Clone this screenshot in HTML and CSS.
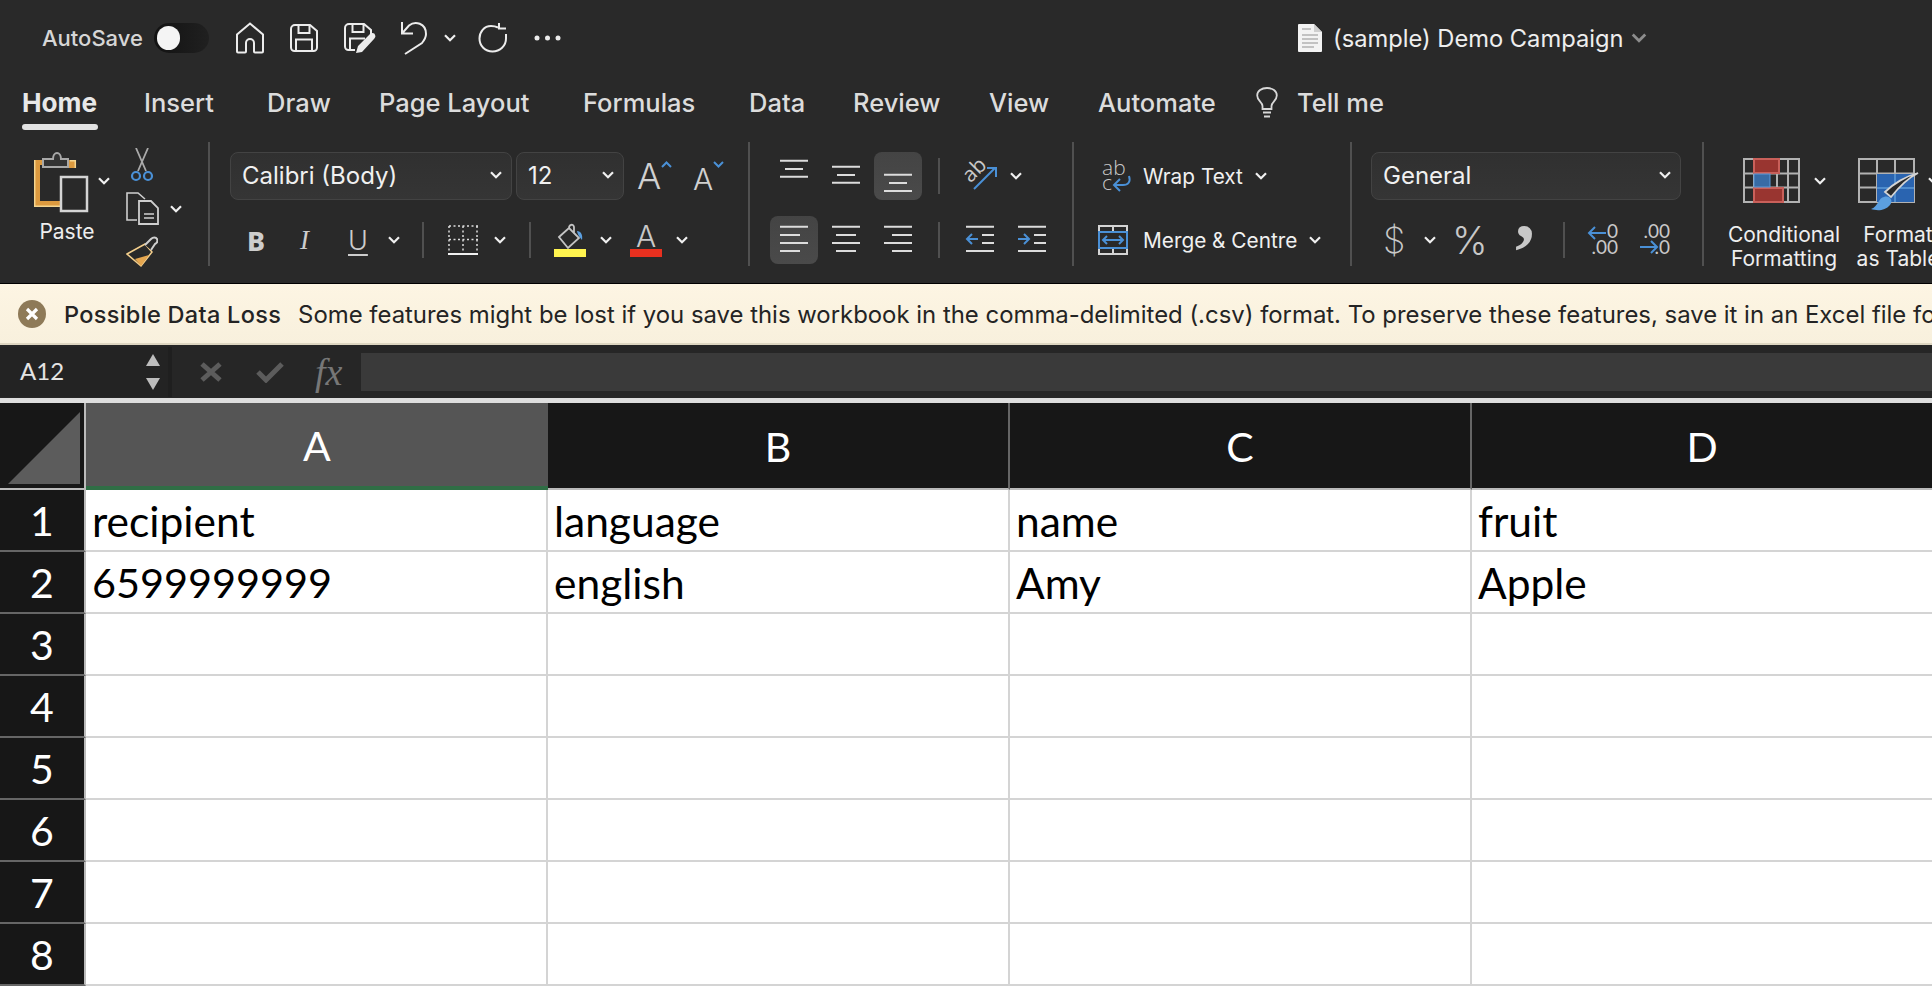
FILE: index.html
```html
<!DOCTYPE html>
<html lang="en">
<head>
<meta charset="utf-8">
<title>(sample) Demo Campaign</title>
<link rel="stylesheet" href="styles.css">
</head>
<body>
<svg class="defs" width="0" height="0" aria-hidden="true">
  <symbol id="chev" viewBox="0 0 12 8"><path d="M1 1.200 6 6.200 11 1.200" fill="none" stroke="#f0f0f0" stroke-width="2.200"/></symbol>
</svg>

<header class="titlebar">
  <span class="autosave">AutoSave</span>
  <span class="toggle"><span class="knob"></span></span>
  <svg class="qa home" width="30" height="32" viewBox="0 0 30 32"><path d="M2 29.500a1 1 0 0 0 1 1H10a1 1 0 0 0 1-1V21a4 4 0 0 1 8 0v8.500a1 1 0 0 0 1 1h7a1 1 0 0 0 1-1V12.500L15 1.500 2 12.500Z" fill="none" stroke="#ececec" stroke-width="2"/></svg>
  <svg class="qa save" width="28" height="28" viewBox="0 0 28 28"><path d="M5 1H20L27 7V23.500A3.500 3.500 0 0 1 23.500 27H4.500A3.500 3.500 0 0 1 1 23.500V5A4 4 0 0 1 5 1Z" fill="none" stroke="#ececec" stroke-width="2"/><path d="M8.500 1V9H19.500V1M6 27V15.500H22V27" fill="none" stroke="#ececec" stroke-width="2"/></svg>
  <svg class="qa saveas" width="32" height="31" viewBox="0 0 32 31"><path d="M11 27H4.500A3.500 3.500 0 0 1 1 23.500V5A4 4 0 0 1 5 1H20L27 7V12M8.500 1V9H19.500V1M6 27V15.500H21" fill="none" stroke="#ececec" stroke-width="2"/><path d="M12 30 14 23 26 11C28 9 31 10 31 12 32 13 31 15 30 16L18 29Z" fill="#ececec"/></svg>
  <svg class="qa undo" width="28" height="34" viewBox="0 0 28 34"><path d="M2 1V12.500H13M2 12.500 9 4.500C15-.5 26 2 26 13 26 17 24 19.500 22 22L5 33" fill="none" stroke="#ececec" stroke-width="2"/></svg>
  <svg class="chev qa-chev" width="12" height="8"><use href="#chev"/></svg>
  <svg class="qa redo" width="30" height="30" viewBox="0 0 30 30"><path d="M20 4.500C17 3 15 3 13 3 6 3 1.500 9 1.500 15.500 1.500 23 7 28.500 14.500 28.500 22 28.500 28 23 28 15.500V11M21 -1V5.500H28" fill="none" stroke="#ececec" stroke-width="2"/></svg>
  <svg class="qa dots" width="27" height="6" viewBox="0 0 27 6"><circle cx="3" cy="3" r="2.500" fill="#ececec"/><circle cx="13.500" cy="3" r="2.500" fill="#ececec"/><circle cx="24" cy="3" r="2.500" fill="#ececec"/></svg>
  <svg class="doc" width="24" height="28" viewBox="0 0 24 28"><path d="M1 0H16L24 8V27a1 1 0 0 1-1 1H1a1 1 0 0 1-1-1V1a1 1 0 0 1 1-1Z" fill="#f3f3f3"/><path d="M16 0V8H24Z" fill="#cfcfcf"/><path d="M4 5h9M4 11h16M4 15h16M4 19h16M4 23h12" stroke="#c2c2c2" stroke-width="2"/></svg>
  <span class="doctitle">(sample) Demo Campaign</span>
  <svg class="chev doc-chev" width="16" height="10"><use href="#chev" class="dim"/></svg>
</header>

<nav class="tabs">
  <span class="tab active">Home</span>
  <span class="tab t-insert">Insert</span>
  <span class="tab t-draw">Draw</span>
  <span class="tab t-page">Page Layout</span>
  <span class="tab t-form">Formulas</span>
  <span class="tab t-data">Data</span>
  <span class="tab t-review">Review</span>
  <span class="tab t-view">View</span>
  <span class="tab t-auto">Automate</span>
  <svg class="bulb" width="22" height="31" viewBox="0 0 22 31"><path d="M6.500 22V19C6.500 15 1.200 14 1.200 8.500 1.200 4 5.500 1 11 1 16.500 1 20.800 4 20.800 8.500 20.800 14 15.500 15 15.500 19V22ZM7 25.500H15M8 29.500H14" fill="none" stroke="#d8d8d8" stroke-width="1.800"/></svg>
  <span class="tab t-tell">Tell me</span>
</nav>

<section class="ribbon">
  <div class="group g-clip">
    <div class="paste">
      <div class="paste-top">
        <svg width="56" height="66" viewBox="0 0 56 66"><path d="M0 12H8V17H6V53H26V59H0Z" fill="#dc9a3f"/><path d="M35 12H42V20H35Z" fill="#dc9a3f"/><path d="M.7 12V58.300H26M36 12.700H41.300V20" fill="none" stroke="#f5d58f" stroke-width="1.500"/><path d="M9 19V11H19C19 3 27 3 27 11H34V19Z" fill="#333" stroke="#a8a8a8" stroke-width="2"/><rect x="27" y="29" width="26" height="34" fill="#292929" stroke="#d4d4d4" stroke-width="2.500"/></svg>
        <svg class="chev" width="12" height="8"><use href="#chev"/></svg>
      </div>
      <span class="label">Paste</span>
    </div>
    <div class="clip-tools">
      <svg class="cut" width="24" height="34" viewBox="0 0 24 34"><path d="M6 0 16 23M18 0 8 23" stroke="#aaa" stroke-width="1.800" fill="none"/><circle cx="6" cy="28" r="4" fill="none" stroke="#4a90d6" stroke-width="2.200"/><circle cx="18" cy="28" r="4" fill="none" stroke="#4a90d6" stroke-width="2.200"/></svg>
      <div class="copy-row">
        <svg width="34" height="34" viewBox="0 0 34 34"><path d="M11 28H1V1H12L19 7" fill="none" stroke="#cfcfcf" stroke-width="1.600"/><path d="M13 9H25L32 16V32H13Z" fill="none" stroke="#cfcfcf" stroke-width="1.800"/><path d="M18 22h10M18 26h10" stroke="#cfcfcf" stroke-width="1.600"/></svg>
        <svg class="chev" width="12" height="8"><use href="#chev"/></svg>
      </div>
      <svg width="32" height="32" viewBox="0 0 32 32"><path d="M1 18 19 8 26 16 15 30Z" fill="#292929" stroke="#f4cf8c" stroke-width="1.500"/><path d="M9 23 23 19 15 30Z" fill="#e5a64f"/><path d="M19 9 25 3C27 1 30 1 31 3 32 5 31 7 29 8L25 14" fill="#292929" stroke="#cfcfcf" stroke-width="2"/></svg>
    </div>
  </div>
  <div class="sep-v"></div>

  <div class="group g-font">
    <div class="row row-top font-top">
      <div class="select s-font"><span>Calibri (Body)</span><svg class="chev" width="12" height="8"><use href="#chev"/></svg></div>
      <div class="select s-size"><span>12</span><svg class="chev" width="12" height="8"><use href="#chev"/></svg></div>
      <span class="grow"><span class="big-a">A</span><svg class="caret" width="11" height="7" viewBox="0 0 11 7"><path d="M1 6 5.500 1.500 10 6" fill="none" stroke="#4a90d6" stroke-width="2"/></svg></span>
      <span class="shrink"><span class="small-a">A</span><svg class="caret" width="11" height="7" viewBox="0 0 11 7"><path d="M1 1 5.500 5.500 10 1" fill="none" stroke="#4a90d6" stroke-width="2"/></svg></span>
    </div>
    <div class="row font-bottom">
      <span class="fmt bold">B</span>
      <span class="fmt italic">I</span>
      <span class="fmt under">U</span>
      <svg class="chev" width="12" height="8"><use href="#chev"/></svg>
      <span class="sep-s"></span>
      <svg width="30" height="30" viewBox="0 0 30 30"><path d="M1 1H30M1 14.500H30M1 1V28M15 1V28M29 1V28" fill="none" stroke="#ddd" stroke-width="1.500" stroke-dasharray="2 2.500"/><path d="M0 29H30" stroke="#f0f0f0" stroke-width="2"/></svg>
      <svg class="chev" width="12" height="8"><use href="#chev"/></svg>
      <span class="sep-s"></span>
      <svg class="fill" width="32" height="34" viewBox="0 0 32 34"><path d="M5 14 15 5 25 15 14 25Z M15 5C15 2 19 0 20 4V10" fill="none" stroke="#c4c4c4" stroke-width="1.800"/><path d="M23 8C27 8 29 12 28 17 26 14 24 13 23 8Z" fill="#5b9fe0"/><rect x="0" y="26" width="32" height="8" fill="#fff44f"/></svg>
      <svg class="chev" width="12" height="8"><use href="#chev"/></svg>
      <span class="color-a"><span class="ca-glyph">A</span><span class="ca-bar"></span></span>
      <svg class="chev" width="12" height="8"><use href="#chev"/></svg>
    </div>
  </div>
  <div class="sep-v"></div>

  <div class="group g-align">
    <div class="row row-top align-row">
      <svg class="abtn" width="48" height="48" viewBox="0 0 48 48"><path d="M10 8.700H38M15 17H33M10 24.700H38" stroke="#dcdcdc" stroke-width="2"/></svg>
      <svg class="abtn" width="48" height="48" viewBox="0 0 48 48"><path d="M10 14.700H38M15 23H33M10 30.700H38" stroke="#dcdcdc" stroke-width="2"/></svg>
      <svg class="abtn on" width="48" height="48" viewBox="0 0 48 48"><path d="M10 22.700H38M15 31H33M10 39H38" stroke="#dcdcdc" stroke-width="2"/></svg>
      <span class="sep-s"></span>
      <svg class="abtn" width="48" height="48" viewBox="0 0 48 48"><text x="6" y="25" class="svg-ab" transform="rotate(-45 18 18)">ab</text><path d="M18 37 39 16M31 16H40V25" fill="none" stroke="#4a90d6" stroke-width="2"/></svg>
      <svg class="chev" width="12" height="8"><use href="#chev"/></svg>
    </div>
    <div class="row align-row">
      <svg class="abtn on" width="48" height="48" viewBox="0 0 48 48"><path d="M10 10.700H38M10 19H30M10 27H38M10 35H30" stroke="#dcdcdc" stroke-width="2"/></svg>
      <svg class="abtn" width="48" height="48" viewBox="0 0 48 48"><path d="M10 10.700H38M14 19H34M10 27H38M14 35H34" stroke="#dcdcdc" stroke-width="2"/></svg>
      <svg class="abtn" width="48" height="48" viewBox="0 0 48 48"><path d="M10 10.700H38M18 19H38M10 27H38M18 35H38" stroke="#dcdcdc" stroke-width="2"/></svg>
      <span class="sep-s"></span>
      <svg class="abtn" width="48" height="48" viewBox="0 0 48 48"><path d="M10 10.700H38M26 19H38M26 27H38M10 35H38" stroke="#dcdcdc" stroke-width="2"/><path d="M22 23H11M16 18 11 23 16 28" fill="none" stroke="#4a90d6" stroke-width="2"/></svg>
      <svg class="abtn" width="48" height="48" viewBox="0 0 48 48"><path d="M10 10.700H38M26 19H38M26 27H38M10 35H38" stroke="#dcdcdc" stroke-width="2"/><path d="M10 23H21M16 18 21 23 16 28" fill="none" stroke="#4a90d6" stroke-width="2"/></svg>
    </div>
  </div>
  <div class="sep-v"></div>

  <div class="group g-wrap">
    <div class="row row-top wrap-row">
      <svg class="wicon" width="34" height="34" viewBox="0 0 34 34"><text x="4" y="16" class="svg-abc">ab</text><text x="4" y="31" class="svg-abc">c</text><path d="M31 17C33 23 30 26 25 26H17M22 20 16 26 22 32" fill="none" stroke="#4a90d6" stroke-width="2"/></svg>
      <span class="wtext">Wrap Text</span>
      <svg class="chev" width="12" height="8"><use href="#chev"/></svg>
    </div>
    <div class="row wrap-row">
      <svg class="wicon" width="34" height="30" viewBox="0 0 34 30"><path d="M1 1H29V29H1ZM15 1V7M15 23V29" fill="none" stroke="#d4d4d4" stroke-width="2"/><rect x="1" y="7" width="28" height="16" fill="#292929" stroke="#4a90d6" stroke-width="2"/><path d="M5 15H25M9 11 5 15 9 19M21 11 25 15 21 19" fill="none" stroke="#4a90d6" stroke-width="2"/></svg>
      <span class="wtext">Merge &amp; Centre</span>
      <svg class="chev" width="12" height="8"><use href="#chev"/></svg>
    </div>
  </div>
  <div class="sep-v"></div>

  <div class="group g-num">
    <div class="row row-top">
      <div class="select s-general"><span>General</span><svg class="chev" width="12" height="8"><use href="#chev"/></svg></div>
    </div>
    <div class="row num-bottom">
      <span class="dollar">$</span>
      <svg class="chev" width="12" height="8"><use href="#chev"/></svg>
      <span class="pct">%</span>
      <svg class="comma-svg" width="20" height="34" viewBox="0 0 20 34"><text x="0" y="15" class="svg-comma">,</text></svg>
      <span class="sep-s"></span>
      <svg width="32" height="36" viewBox="0 0 32 36"><text x="31" y="16" class="svg-dec">0</text><text x="31" y="32" class="svg-dec">.00</text><path d="M19 11H2M8 5 2 11 8 17" fill="none" stroke="#4a90d6" stroke-width="2"/></svg>
      <svg width="32" height="36" viewBox="0 0 32 36"><text x="31" y="16" class="svg-dec">.00</text><text x="31" y="32" class="svg-dec">.0</text><path d="M1 25H18M12 19 18 25 12 31" fill="none" stroke="#4a90d6" stroke-width="2"/></svg>
    </div>
  </div>
  <div class="sep-v"></div>

  <div class="group g-styles">
    <div class="style s-cf">
      <div class="style-top">
        <svg width="57" height="45" viewBox="0 0 57 45"><path d="M1 1H56V44H1ZM11 1V44M34 1V44M45 1V44M1 15.500H56M1 29.500H56" fill="none" stroke="#b2b2b2" stroke-width="2"/><path d="M11 1H36V15H11ZM11 30H40V44H11Z" fill="#993530" stroke="#c9605a" stroke-width="2"/><rect x="11" y="16" width="16" height="13" fill="#386ba5" stroke="#5c9ad8"/></svg>
        <svg class="chev" width="12" height="8"><use href="#chev"/></svg>
      </div>
      <span class="label two">Conditional<br>Formatting</span>
    </div>
    <div class="style s-ft">
      <div class="style-top">
        <svg width="62" height="54" viewBox="0 0 62 54"><path d="M1 1H56V44H1ZM19 1V44M37 1V44M1 15.500H56M1 29.500H56" fill="none" stroke="#b2b2b2" stroke-width="2"/><rect x="19" y="16" width="37" height="28" fill="#2a64b0"/><path d="M19 30H56M37 16V44" stroke="#5c9ad8" stroke-width="1.500"/><path d="M60 15C52 19 41 29 33 39L27 34C35 26 48 18 60 15Z" fill="#292929" stroke="#d4d4d4" stroke-width="1.800"/><path d="M13 51C20 49 21 39 26 39 31 37 36 42 32 47 27 53 19 53 13 51Z" fill="#5b9fe0"/></svg>
        <svg class="chev" width="12" height="8"><use href="#chev"/></svg>
      </div>
      <span class="label two">Format<br>as Table</span>
    </div>
  </div>
</section>

<div class="banner">
  <span class="b-icon"><svg width="28" height="28" viewBox="0 0 28 28"><circle cx="14" cy="14" r="14" fill="#8e7a58"/><path d="M9 9 19 19M19 9 9 19" stroke="#fff" stroke-width="3.200"/></svg></span>
  <strong class="b-title">Possible Data Loss</strong>
  <span class="b-text">Some features might be lost if you save this workbook in the comma-delimited (.csv) format. To preserve these features, save it in an Excel file format.</span>
</div>

<div class="formula">
  <div class="namebox">
    <span class="nb-text">A12</span>
    <span class="steppers">
      <svg width="14" height="12" viewBox="0 0 14 12"><path d="M7 0 14 12H0Z" fill="#bdbdbd"/></svg>
      <svg width="14" height="12" viewBox="0 0 14 12"><path d="M7 12 14 0H0Z" fill="#bdbdbd"/></svg>
    </span>
  </div>
  <svg class="f-x" width="22" height="20" viewBox="0 0 22 20"><path d="M2 2 20 18M20 2 2 18" stroke="#5c5c5c" stroke-width="5"/></svg>
  <svg class="f-ok" width="28" height="22" viewBox="0 0 28 22"><path d="M2 11 10 19 26 3" fill="none" stroke="#5c5c5c" stroke-width="5"/></svg>
  <span class="fx">fx</span>
  <div class="f-input"></div>
</div>

<main class="sheet">
  <div class="corner"><svg width="72" height="72" viewBox="0 0 72 72"><path d="M0 72 72 0V72Z" fill="#5c5c5c"/></svg></div>
  <div class="col sel">A</div><div class="col">B</div><div class="col">C</div><div class="col last">D</div>

  <div class="rh">1</div><div class="cell">recipient</div><div class="cell">language</div><div class="cell">name</div><div class="cell last">fruit</div>
  <div class="rh">2</div><div class="cell num">6599999999</div><div class="cell">english</div><div class="cell">Amy</div><div class="cell last">Apple</div>
  <div class="rh">3</div><div class="cell"></div><div class="cell"></div><div class="cell"></div><div class="cell last"></div>
  <div class="rh">4</div><div class="cell"></div><div class="cell"></div><div class="cell"></div><div class="cell last"></div>
  <div class="rh">5</div><div class="cell"></div><div class="cell"></div><div class="cell"></div><div class="cell last"></div>
  <div class="rh">6</div><div class="cell"></div><div class="cell"></div><div class="cell"></div><div class="cell last"></div>
  <div class="rh">7</div><div class="cell"></div><div class="cell"></div><div class="cell"></div><div class="cell last"></div>
  <div class="rh">8</div><div class="cell"></div><div class="cell"></div><div class="cell"></div><div class="cell last"></div>
</main>
</body>
</html>
```

FILE: styles.css
```css
* { box-sizing: border-box; }
html { height: 986px; overflow: hidden; }
html, body { margin: 0; padding: 0; }
body {
  width: 1932px;
  height: 986px;
  overflow: hidden;
  background: #292929;
  font-family: Inter, "Noto Sans", sans-serif;
  color: #eee;
}
svg { display: block; flex: none; }
.defs { position: absolute; }
.dim { opacity: .5; }

/* title bar */
.titlebar { display: flex; align-items: center; height: 76px; padding-left: 42px; }
.autosave { width: 112px; font-size: 22px; font-weight: 500; color: #d6d6d6; white-space: nowrap; }
.toggle { display: block; width: 55px; height: 30px; border-radius: 15px; background: linear-gradient(90deg, #121212, #202020); padding: 3px; }
.knob { display: block; width: 23px; height: 24px; border-radius: 12px; background: #f4f4f4; }
.home { margin-left: 26px; }
.save { margin-left: 25px; }
.saveas { margin-left: 26px; }
.undo { margin-left: 24px; }
.qa-chev { margin-left: 16px; }
.redo { margin-left: 22px; }
.dots { margin-left: 26px; }
.doc { margin-left: 737px; }
.doctitle { margin-left: 11px; font-size: 23.700px; color: #eee; white-space: nowrap; }
.doc-chev { margin-left: 8px; }

/* tabs */
.tabs { display: flex; align-items: flex-start; height: 54px; padding-left: 22px; }
.tab { display: block; flex: none; height: 54px; font-size: 25.500px; font-weight: 500; line-height: 54px; color: #dcdcdc; white-space: nowrap; }
.tab.active { width: 122px; font-size: 26.200px; font-weight: 700; color: #e8e8e8; position: relative; }
.tab.active::after { content: ""; position: absolute; left: 0; width: 76px; bottom: 0; height: 6px; border-radius: 3px; background: #e2e2e2; }
.t-insert { width: 123px; }
.t-draw { width: 112px; }
.t-page { width: 204px; }
.t-form { width: 166px; }
.t-data { width: 104px; }
.t-review { width: 136px; }
.t-view { width: 109px; }
.t-auto { width: 158px; }
.bulb { margin: 11px 19px 0 0; }

/* ribbon */
.ribbon { display: flex; align-items: flex-start; height: 154px; padding-top: 12px; border-bottom: 1px solid #000; }
.sep-v { flex: none; width: 2px; height: 124px; background: #505050; }
.group { flex: none; height: 124px; padding-top: 10px; }
.row { display: flex; align-items: center; height: 48px; }
.row-top { margin-bottom: 16px; }
.sep-s { flex: none; display: block; width: 2px; height: 36px; background: #505050; }
.label { display: block; font-size: 21px; line-height: 24px; color: #eee; text-align: center; white-space: nowrap; }

.g-clip { width: 208px; display: flex; padding: 6px 0 0 34px; }
.paste { width: 92px; }
.paste-top { display: flex; align-items: center; gap: 8px; height: 66px; }
.paste .label { width: 66px; margin-top: 6px; text-align: center; }
.clip-tools { display: flex; flex-direction: column; align-items: flex-start; gap: 10px; }
.cut { margin-left: 4px; }
.copy-row { display: flex; align-items: center; gap: 10px; }

.g-font { width: 538px; padding-left: 20px; }
.select { display: flex; align-items: center; justify-content: space-between; height: 48px; padding: 0 9px 2px 11px; border: 1.500px solid #434343; border-radius: 8px; background: linear-gradient(#303030, #353535); font-size: 24px; color: #f0f0f0; white-space: nowrap; }
.s-font { width: 282px; }
.s-size { width: 108px; margin-left: 4px; padding-left: 11px; }
.s-general { width: 310px; }
.grow, .shrink { display: flex; align-items: flex-start; }
.grow { margin-left: 13px; width: 56px; }
.big-a, .small-a { font-weight: 300; color: #d0d0d0; line-height: 1; }
.big-a { font-size: 36px; }
.small-a { font-size: 30px; margin-top: 6px; }
.caret { margin-top: 3px; }
.font-bottom { display: grid; grid-template-columns: 53px 48px 40px 34px 26px 46px 35px 25px 46px 30px 46px 12px; align-items: center; justify-items: start; padding-left: 17px; }
.fmt { color: #cdcdcd; font-size: 27px; line-height: 1; }
.bold { font-weight: 800; font-family: "Noto Sans", sans-serif; }
.italic { font-family: "Liberation Serif", serif; font-style: italic; }
.under { text-decoration: underline; text-underline-offset: 4px; text-decoration-thickness: 2px; font-weight: 300; }
.fill { overflow: visible; }
.color-a { display: flex; flex-direction: column; align-items: center; width: 32px; height: 34px; }
.ca-glyph { font-size: 30px; line-height: 26px; font-weight: 300; color: #c8c8c8; }
.ca-bar { display: block; width: 32px; height: 8px; background: #e8301f; }

.g-align { width: 322px; padding-left: 20px; }
.align-row { display: flex; gap: 4px; }
.abtn { border-radius: 8px; }
.abtn.on { background: linear-gradient(#444, #4a4a4a); }
.align-row .sep-s { margin: 0 12px; }
.align-row .chev { margin-left: 2px; }
.svg-ab { font: 400 21px "Open Sans", sans-serif; fill: #c8c8c8; }

.g-wrap { width: 276px; padding-left: 24px; }
.wrap-row { display: flex; }
.wtext { margin-left: 11px; margin-right: 12px; font-size: 20.800px; color: #f0f0f0; white-space: nowrap; }
.svg-abc { font: 300 21px "Open Sans", sans-serif; fill: #c8c8c8; }

.g-num { width: 350px; padding-left: 19px; }
.num-bottom { display: grid; grid-template-columns: 41px 31px 60px 48px 24px 52px 32px; align-items: center; justify-items: start; padding-left: 12px; }
.dollar { font-size: 36px; font-weight: 200; color: #c8c8c8; line-height: 1; }
.pct { font-size: 38px; font-weight: 300; color: #c8c8c8; line-height: 1; margin-left: -3px; }
.svg-comma { font: 700 80px "Liberation Serif", serif; fill: #c8c8c8; }
.comma-svg { overflow: visible; }
.svg-dec { font: 400 19px Lato, sans-serif; fill: #c8c8c8; text-anchor: end; }

.g-styles { display: flex; padding-top: 16px; padding-left: 24px; }
.style { display: flex; flex-direction: column; align-items: center; flex: none; }
.style-top { display: flex; flex: none; align-items: flex-start; gap: 14px; height: 54px; align-self: flex-start; }
.style-top .chev { margin-top: 19px; }
.style .label { flex: none; margin-top: 11px; }
.s-cf { width: 112px; }
.s-cf .style-top { margin-left: 15px; }
.s-ft { width: 84px; margin-left: 16px; }
.s-ft .style-top { margin-left: 2px; gap: 8px; }

/* banner */
.banner { display: flex; align-items: center; height: 61px; padding: 1px 0 0 18px; background: linear-gradient(#fdf5e3, #f8f0dd); border-bottom: 2px solid #ded6c1; color: #242424; white-space: nowrap; overflow: hidden; }
.b-icon { flex: none; }
.b-title { margin-left: 18px; font-size: 23.500px; font-weight: 500; letter-spacing: .3px; flex: none; }
.b-text { margin-left: 17px; font-size: 23.900px; flex: none; }

/* formula bar */
.formula { display: flex; align-items: center; height: 53px; background: #262626; }
.namebox { display: flex; align-items: center; justify-content: space-between; width: 172px; height: 50px; padding: 0 8px 0 20px; background: #232323; border-right: 4px solid #1f1f1f; font: 400 24px Lato, sans-serif; color: #e4e4e4; }
.nb-text { padding-bottom: 3px; }
.steppers { display: flex; flex-direction: column; gap: 12px; }
.f-x { margin-left: 28px; }
.f-ok { margin-left: 34px; }
.fx { width: 46px; margin-left: 31px; font: italic 400 38px "Liberation Serif", serif; color: #777; }
.f-input { flex: 1; height: 38px; background: #3a3a3a; }

/* sheet */
.sheet { display: grid; grid-template-columns: 86px 462px 462px 462px 460px; grid-template-rows: 87px repeat(8, 62px); border-top: 5px solid; border-image: linear-gradient(#dedede, #aaa 50%, #ddd) 1; font-family: Lato, sans-serif; font-size: 42.500px; }
.corner { display: flex; align-items: flex-end; justify-content: flex-end; padding: 0 4px 4px 0; background: #171717; border-right: 2px solid #bbb; border-bottom: 2px solid #bbb; }
.col { display: flex; align-items: center; justify-content: center; padding-top: 2px; background: #171717; color: #fff; font-size: 41px; border-right: 2px solid #666; border-bottom: 2px solid #bbb; }
.col.sel { background: #555; border-right: 0; border-bottom: 4px solid #2f6e45; }
.col.last { border-right: 0; }
.rh { display: flex; align-items: center; justify-content: center; background: #171717; color: #fff; font-size: 41px; border-right: 2px solid #bbb; border-bottom: 2px solid #666; }
.cell { display: flex; align-items: center; padding-left: 6px; background: #fff; color: #000; border-right: 2px solid #d4d4d4; border-bottom: 2px solid #d4d4d4; }
.cell.num { font-size: 41.400px; }
.cell.last { border-right: 0; }
```
